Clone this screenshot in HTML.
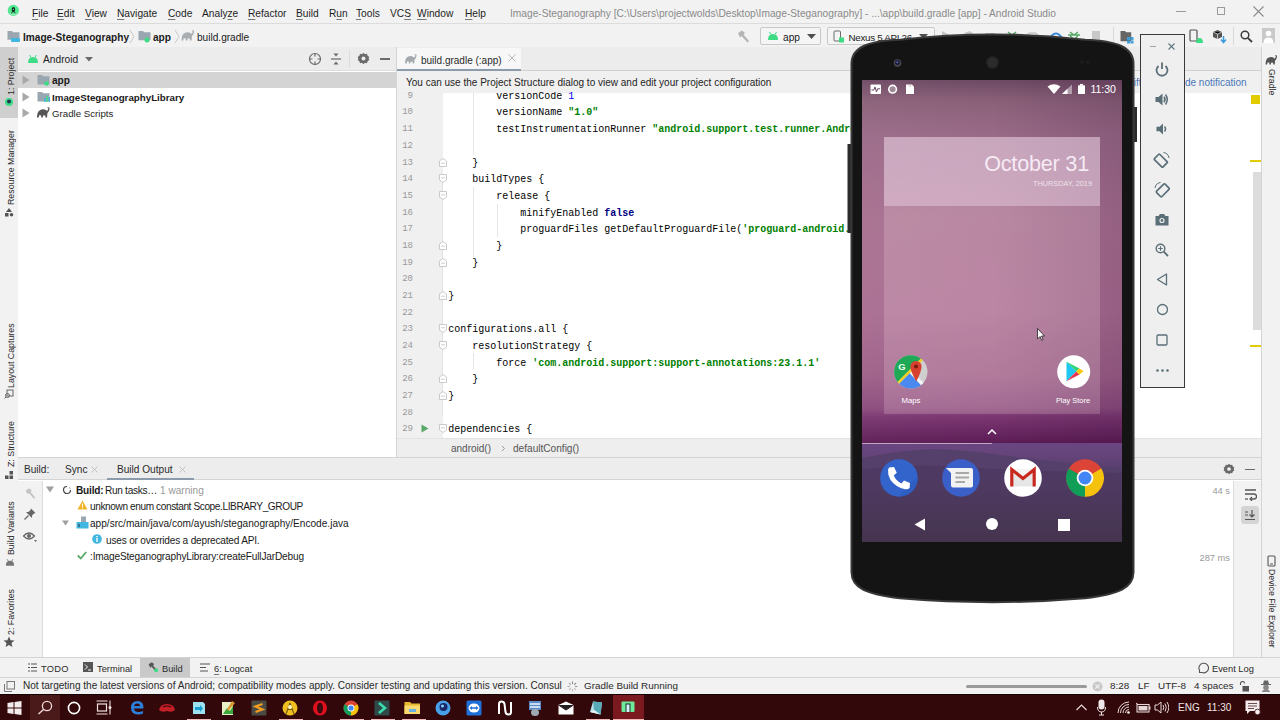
<!DOCTYPE html>
<html><head><meta charset="utf-8">
<style>
*{margin:0;padding:0;box-sizing:border-box}
html,body{width:1280px;height:720px;overflow:hidden;background:#f2f2f2;font-family:"Liberation Sans",sans-serif;color:#1e1e1e}
.a{position:absolute}
u{text-decoration-thickness:1px;text-underline-offset:1.5px;text-decoration-color:#777}
.t{position:absolute;white-space:nowrap;font-size:11px;line-height:14px}
.vt{writing-mode:vertical-rl;transform:rotate(180deg);white-space:nowrap;line-height:12px;color:#2a2a2a;text-align:left}
.cl{position:absolute;left:51.2px;white-space:pre;font-family:"Liberation Mono",monospace;font-size:10px;line-height:14px;color:#000}
.ln{position:absolute;left:0;width:16px;text-align:right;font-family:"Liberation Mono",monospace;font-size:9px;line-height:14px;color:#999}
.fold{position:absolute;left:41.5px}
.vtr{writing-mode:vertical-rl;white-space:nowrap;line-height:12px;color:#2a2a2a}
.mono{font-family:"Liberation Mono",monospace}
</style></head><body>
<!-- MENU BAR -->
<div class="a" id="menubar" style="left:0;top:0;width:1280px;height:24px;background:#f2f2f2;border-bottom:1px solid #dcdcdc">
  <svg class="a" style="left:7px;top:4px" width="13" height="13" viewBox="0 0 13 13"><circle cx="6.3" cy="6.4" r="5.6" fill="#52e890"/><ellipse cx="6.4" cy="5.6" rx="1.7" ry="2.6" fill="#0a2418"/><circle cx="6.4" cy="5.4" r="0.7" fill="#8fd0b0"/><path d="M5.2 8 L4.4 9.8 M7.6 8 L8.4 9.8" stroke="#0a2418" stroke-width="0.9"/><path d="M3 9.5 Q6.3 11.5 9.6 9.5" stroke="#c8f8d8" stroke-width="0.8" fill="none"/></svg>
  <div class="t" style="left:32px;top:6.5px;font-size:10.2px"><u>F</u>ile</div>
  <div class="t" style="left:57px;top:6.5px;font-size:10.2px"><u>E</u>dit</div>
  <div class="t" style="left:85px;top:6.5px;font-size:10.2px"><u>V</u>iew</div>
  <div class="t" style="left:117px;top:6.5px;font-size:10.2px"><u>N</u>avigate</div>
  <div class="t" style="left:168px;top:6.5px;font-size:10.2px"><u>C</u>ode</div>
  <div class="t" style="left:202px;top:6.5px;font-size:10.2px">Analy<u>z</u>e</div>
  <div class="t" style="left:248px;top:6.5px;font-size:10.2px"><u>R</u>efactor</div>
  <div class="t" style="left:296px;top:6.5px;font-size:10.2px"><u>B</u>uild</div>
  <div class="t" style="left:329px;top:6.5px;font-size:10.2px">R<u>u</u>n</div>
  <div class="t" style="left:356px;top:6.5px;font-size:10.2px"><u>T</u>ools</div>
  <div class="t" style="left:390px;top:6.5px;font-size:10.2px">VC<u>S</u></div>
  <div class="t" style="left:417px;top:6.5px;font-size:10.2px"><u>W</u>indow</div>
  <div class="t" style="left:465px;top:6.5px;font-size:10.2px"><u>H</u>elp</div>
  <div class="t" style="left:510px;top:6.5px;font-size:10.2px;color:#8a8a8a">Image-Steganography [C:\Users\projectwolds\Desktop\Image-Steganography] - ...\app\build.gradle [app] - Android Studio</div>
  <div class="a" style="left:1176px;top:11px;width:10px;height:1px;background:#9a9a9a"></div>
  <div class="a" style="left:1217px;top:7px;width:8px;height:8px;border:1px solid #9a9a9a"></div>
  <svg class="a" style="left:1253px;top:6px" width="11" height="11"><path d="M0.5 0.5 L10.5 10.5 M10.5 0.5 L0.5 10.5" stroke="#8a8a8a" stroke-width="1.1"/></svg>
</div>
<!-- NAV BAR -->
<div class="a" id="navbar" style="left:0;top:24px;width:1280px;height:23.5px;background:#f2f2f2;border-bottom:1px solid #d4d4d4">
  <svg class="a" style="left:7px;top:6px" width="14" height="13" viewBox="0 0 14 13"><path d="M0.5 1 h4.5 l1.2 1.3 h6.3 v7.5 h-12 z" fill="#9aa7b0"/><rect x="4" y="8" width="9" height="4" rx="1" fill="#40b6e0"/></svg>
  <div class="t" style="left:23px;top:6.5px;font-size:10.1px;font-weight:bold;color:#1a1a1a">Image-Steganography</div>
  <svg class="a" style="left:129px;top:5px" width="6" height="15"><path d="M1 1 L5 7.5 L1 14" stroke="#c8c8c8" fill="none" stroke-width="1"/></svg>
  <svg class="a" style="left:138px;top:6px" width="14" height="13" viewBox="0 0 14 13"><path d="M0.5 1 h4.5 l1.2 1.3 h6.3 v8 h-12 z" fill="#9aa7b0"/><circle cx="9" cy="10" r="2.5" fill="#3ddc84"/></svg>
  <div class="t" style="left:153px;top:6.5px;font-size:10.1px;font-weight:bold;color:#1a1a1a">app</div>
  <svg class="a" style="left:174px;top:5px" width="6" height="15"><path d="M1 1 L5 7.5 L1 14" stroke="#c8c8c8" fill="none" stroke-width="1"/></svg>
  <svg class="a" style="left:181px;top:6px" width="14" height="12" viewBox="0 0 14 12"><path d="M0.5 10.5 Q0.5 5 3 3.4 Q5.5 2 8 2.4 Q9.8 2.7 10.4 4 Q11.4 3 11.8 1.8 Q11.9 1 11 1 L10.6 0.6 Q13.2 -0.2 13.1 1.8 Q12.9 4.2 10.9 6.2 L10.6 10.5 L9 10.5 L8.7 8.2 Q7.6 8.7 6.6 8.2 L6.3 10.5 L4.8 10.5 L4.5 8.2 Q3.4 8.4 2.8 8 L2.2 10.5 Z" fill="#a8adb2"/></svg>
  <div class="t" style="left:197px;top:6.5px;font-size:10.1px;color:#1a1a1a">build.gradle</div>
  <svg class="a" style="left:736px;top:5px" width="15" height="15" viewBox="0 0 15 15"><path d="M2 4 L6 1.5 L9 4 L7.5 5.5 L13 12 L11.5 13.5 L5.5 7 L4 8.5 Z" fill="#b4b4b4"/></svg>
  <div class="a" style="left:760px;top:3px;width:61px;height:18px;border:1px solid #c9c9c9;border-radius:2px;background:#f5f5f5"></div>
  <svg class="a" style="left:767px;top:7px" width="12" height="10" viewBox="0 0 12 10"><path d="M1 9 Q1 3 6 3 Q11 3 11 9 Z" fill="#3ddc84"/><path d="M2.5 1 L4 3.5 M9.5 1 L8 3.5" stroke="#3ddc84" stroke-width="1"/></svg>
  <div class="t" style="left:783px;top:6.5px;font-size:10.2px;color:#1a1a1a">app</div>
  <svg class="a" style="left:807px;top:10px" width="9" height="6"><path d="M0 0 L9 0 L4.5 5 Z" fill="#505050"/></svg>
  <div class="a" style="left:827px;top:3px;width:108px;height:18px;border:1px solid #c9c9c9;border-radius:2px;background:#f5f5f5"></div>
  <svg class="a" style="left:833px;top:6px" width="12" height="13" viewBox="0 0 12 13"><rect x="1" y="1" width="6.5" height="10" rx="1" fill="none" stroke="#6a6a6a" stroke-width="1"/><rect x="6" y="7.5" width="5" height="5" fill="#3ddc84"/></svg>
  <div class="t" style="left:848.5px;top:6.5px;font-size:9.8px;letter-spacing:-0.3px;color:#1a1a1a">Nexus 5 API 26</div>
  <svg class="a" style="left:919px;top:10px" width="9" height="6"><path d="M0 0 L9 0 L4.5 5 Z" fill="#505050"/></svg>
  <svg class="a" style="left:940px;top:5px" width="160" height="14" viewBox="0 0 160 14"><path d="M2 2 L11 7 L2 12 Z" fill="#c4c4c4"/><path d="M24 4 L30 2 L36 7 L30 12 Z" fill="#c8c8c8"/><rect x="45" y="4" width="10" height="2" fill="#c0c0c0"/><path d="M68 3 L72 6 L76 3 M66 6 H78 M68 6 Q72 14 76 6" stroke="#59a869" stroke-width="1.5" fill="none"/><rect x="88" y="4" width="9" height="9" rx="2" fill="none" stroke="#c8c8c8" stroke-width="1.5"/><path d="M110 9 Q116 0 122 9" stroke="#3a8ad8" stroke-width="2" fill="none"/><path d="M130 3 L134 6 L138 3 M128 6 H140 M130 6 Q134 14 138 6" stroke="#59a869" stroke-width="1.5" fill="none"/><rect x="152" y="2" width="9" height="9" fill="#c8c8c8"/></svg>
  <div class="a" style="left:1113px;top:3px;width:1px;height:18px;background:#d8d8d8"></div>
  <svg class="a" style="left:1120px;top:6px" width="14" height="14" viewBox="0 0 14 14"><path d="M0.5 1 h4.5 l1.2 1.3 h5 v9 h-10.7 z" fill="#666"/><rect x="7" y="7" width="3" height="3" fill="#40a0d8"/><rect x="10.5" y="7" width="3" height="3" fill="#40a0d8"/><rect x="7" y="10.5" width="3" height="3" fill="#40a0d8"/><rect x="10.5" y="10.5" width="3" height="3" fill="#40a0d8"/></svg>
  <svg class="a" style="left:1189px;top:5px" width="15" height="15" viewBox="0 0 15 15"><rect x="1" y="1" width="7" height="11" rx="1" fill="none" stroke="#555" stroke-width="1.2"/><path d="M7 14 Q7 9 10.5 9 Q14 9 14 14 Z" fill="#3ddc84"/></svg>
  <svg class="a" style="left:1212px;top:5px" width="15" height="15" viewBox="0 0 15 15"><path d="M5.5 1 L10 3 L10 8 L5.5 10 L1 8 L1 3 Z" fill="#555"/><path d="M5.5 5 L5.5 10 M1 3 L5.5 5 L10 3" stroke="#ddd" stroke-width="0.8"/><path d="M11.5 7 L11.5 13 M9 10.5 L11.5 13.5 L14 10.5" stroke="#3a9ad9" stroke-width="1.5" fill="none"/></svg>
  <div class="a" style="left:1233px;top:3px;width:1px;height:18px;background:#d8d8d8"></div>
  <svg class="a" style="left:1240px;top:6px" width="13" height="13" viewBox="0 0 13 13"><circle cx="5" cy="5" r="3.8" fill="none" stroke="#3c3c3c" stroke-width="1.5"/><path d="M7.8 7.8 L12 12" stroke="#3c3c3c" stroke-width="1.8"/></svg>
  <div class="a" style="left:1262px;top:4px;width:13px;height:15px;background:#c9c9c9"></div>
  <svg class="a" style="left:1262px;top:4px" width="13" height="15" viewBox="0 0 13 15"><circle cx="6.5" cy="5.5" r="2.8" fill="#fff"/><path d="M1.5 15 Q1.5 9.5 6.5 9.5 Q11.5 9.5 11.5 15 Z" fill="#fff"/></svg>
</div>
<!-- LEFT STRIP -->
<div class="a" id="lstrip" style="left:0;top:47px;width:19px;height:610px;background:#f2f2f2;border-right:1px solid #d4d4d4">
  <div class="a" style="left:0;top:0;width:18px;height:71px;background:#cfcfcf"></div>
  <div class="a vt" style="left:4.5px;top:10px;height:38px;font-size:8.8px">1: Project</div>
  <svg class="a" style="left:4px;top:50px" width="10" height="10"><circle cx="5" cy="5" r="4" fill="#3ddc84"/><circle cx="5" cy="4.5" r="2" fill="#235"/></svg>
  <div class="a vt" style="left:4.5px;top:82px;height:76px;font-size:8.8px">Resource Manager</div>
  <svg class="a" style="left:4px;top:160px" width="10" height="10"><path d="M5 1 L8 5 L2 5 Z" fill="#555"/><rect x="1" y="6" width="3.5" height="3.5" fill="#555"/><circle cx="7.5" cy="7.7" r="1.8" fill="#555"/></svg>
  <div class="a vt" style="left:4.5px;top:275px;height:66px;font-size:8.8px">Layout Captures</div>
  <svg class="a" style="left:4px;top:342px" width="10" height="10"><rect x="3" y="1" width="6" height="6" fill="none" stroke="#666" stroke-width="1"/><circle cx="3.5" cy="6.5" r="2" fill="none" stroke="#666"/><path d="M2 8 L0.5 9.5" stroke="#666"/></svg>
  <div class="a vt" style="left:4.5px;top:374px;height:46px;font-size:8.8px">Z: Structure</div>
  <svg class="a" style="left:4px;top:423px" width="10" height="10"><rect x="5.5" y="1" width="3.5" height="3.5" fill="#555"/><rect x="1" y="5.5" width="3.5" height="3.5" fill="#555"/><rect x="5.5" y="5.5" width="3.5" height="3.5" fill="#555"/></svg>
  <div class="a vt" style="left:4.5px;top:454px;height:54px;font-size:8.8px">Build Variants</div>
  <svg class="a" style="left:5px;top:511px" width="10" height="9" viewBox="0 0 12 10"><path d="M1 9 Q1 3 6 3 Q11 3 11 9 Z" fill="#777"/><path d="M2.5 1 L4 3.5 M9.5 1 L8 3.5" stroke="#777" stroke-width="1"/></svg>
  <div class="a vt" style="left:4.5px;top:543px;height:45px;font-size:8.8px">2: Favorites</div>
  <svg class="a" style="left:3px;top:589px" width="12" height="12" viewBox="0 0 12 12"><path d="M6 0.5 L7.6 4.2 L11.5 4.5 L8.5 7.1 L9.4 11 L6 8.9 L2.6 11 L3.5 7.1 L0.5 4.5 L4.4 4.2 Z" fill="#555"/></svg>
</div>
<!-- PROJECT PANEL -->
<div class="a" id="proj" style="left:18px;top:47px;width:379px;height:410px;background:#fff;border-right:1px solid #d4d4d4">
  <div class="a" style="left:0;top:0;width:378px;height:24px;background:#ececec;border-bottom:1px solid #dedede"></div>
  <svg class="a" style="left:9px;top:7px" width="12" height="10" viewBox="0 0 12 10"><path d="M1 9 Q1 3 6 3 Q11 3 11 9 Z" fill="#3ddc84"/><path d="M2.5 1 L4 3.5 M9.5 1 L8 3.5" stroke="#3ddc84" stroke-width="1"/></svg>
  <div class="t" style="left:25px;top:6px;font-size:10.2px;color:#1e1e1e">Android</div>
  <svg class="a" style="left:67px;top:10px" width="9" height="6"><path d="M0 0 L8 0 L4 4.5 Z" fill="#6a6a6a"/></svg>
  <svg class="a" style="left:290px;top:5px" width="14" height="14" viewBox="0 0 14 14"><circle cx="7" cy="7" r="5.5" fill="none" stroke="#6a6a6a" stroke-width="1.2"/><path d="M7 1 V4.5 M7 9.5 V13 M1 7 H4.5 M9.5 7 H13" stroke="#6a6a6a" stroke-width="1.2"/></svg>
  <svg class="a" style="left:312px;top:5px" width="12" height="14" viewBox="0 0 12 14"><path d="M1 7 H11" stroke="#6a6a6a" stroke-width="1.2"/><path d="M3.5 1.5 H8.5 L6 4.5 Z M3.5 12.5 H8.5 L6 9.5 Z" fill="#6a6a6a"/></svg>
  <div class="a" style="left:331px;top:3px;width:1px;height:18px;background:#dcdcdc"></div>
  <svg class="a" style="left:339px;top:5px" width="13" height="13" viewBox="0 0 13 13"><path d="M6.5 0.8 L8 2.2 L10 1.8 L10.6 3.8 L12.3 5 L11.6 6.5 L12.3 8 L10.6 9.2 L10 11.2 L8 10.8 L6.5 12.2 L5 10.8 L3 11.2 L2.4 9.2 L0.7 8 L1.4 6.5 L0.7 5 L2.4 3.8 L3 1.8 L5 2.2 Z" fill="#6a6a6a"/><circle cx="6.5" cy="6.5" r="2" fill="#ececec"/></svg>
  <div class="a" style="left:362px;top:11px;width:10px;height:1.5px;background:#6a6a6a"></div>
  <div class="a" style="left:0;top:25px;width:378px;height:16px;background:#d4d4d4"></div>
  <svg class="a" style="left:4px;top:28px" width="8" height="10"><path d="M0.5 0.5 L7.5 5 L0.5 9.5 Z" fill="#a8a8a8"/></svg>
  <svg class="a" style="left:19px;top:27px" width="14" height="12" viewBox="0 0 14 12"><path d="M0.5 1 h4.5 l1.2 1.3 h6.3 v8.2 h-12 z" fill="#9aa7b0"/><circle cx="9.5" cy="9.5" r="2.3" fill="#3ddc84"/></svg>
  <div class="t" style="left:34px;top:27.2px;font-size:10.1px;font-weight:bold;color:#1a1a1a">app</div>
  <svg class="a" style="left:4px;top:45px" width="8" height="10"><path d="M0.5 0.5 L7.5 5 L0.5 9.5 Z" fill="#a8a8a8"/></svg>
  <svg class="a" style="left:19px;top:44px" width="14" height="12" viewBox="0 0 14 12"><path d="M0.5 1 h4.5 l1.2 1.3 h6.3 v8.2 h-12 z" fill="#9aa7b0"/><rect x="7" y="7" width="1.5" height="4" fill="#40b6e0"/><rect x="9.3" y="5" width="1.5" height="6" fill="#3ddc84"/><rect x="11.6" y="6" width="1.5" height="5" fill="#40b6e0"/></svg>
  <div class="t" style="left:34px;top:44.2px;font-size:9.75px;font-weight:bold;color:#1a1a1a">ImageSteganographyLibrary</div>
  <svg class="a" style="left:4px;top:61px" width="8" height="10"><path d="M0.5 0.5 L7.5 5 L0.5 9.5 Z" fill="#a8a8a8"/></svg>
  <svg class="a" style="left:18px;top:60px" width="15" height="12" viewBox="0 0 14 12"><path d="M0.5 10.5 Q0.5 5 3 3.4 Q5.5 2 8 2.4 Q9.8 2.7 10.4 4 Q11.4 3 11.8 1.8 Q11.9 1 11 1 L10.6 0.6 Q13.2 -0.2 13.1 1.8 Q12.9 4.2 10.9 6.2 L10.6 10.5 L9 10.5 L8.7 8.2 Q7.6 8.7 6.6 8.2 L6.3 10.5 L4.8 10.5 L4.5 8.2 Q3.4 8.4 2.8 8 L2.2 10.5 Z" fill="#555"/></svg>
  <div class="t" style="left:34px;top:60.2px;font-size:9.7px;color:#1e1e1e">Gradle Scripts</div>
</div>
<!-- EDITOR -->
<div class="a" id="editor" style="left:397px;top:47px;width:864px;height:410px;background:#fff;overflow:hidden">
  <div class="a" style="left:76px;top:46px;width:1px;height:61px;background:#e6e6e6"></div>
  <div class="a" style="left:76px;top:140px;width:1px;height:70px;background:#e6e6e6"></div>
  <div class="a" style="left:100px;top:157px;width:1px;height:33px;background:#e6e6e6"></div>
  <div class="a" style="left:76px;top:306px;width:1px;height:16px;background:#e6e6e6"></div>
  <div class="a" style="left:0;top:46px;width:46px;height:345px;background:#f0f0f0"></div>
  <div class="a" style="left:45px;top:129px;width:1px;height:240px;background:#e2e2e2"></div>
  <div class="ln" style="top:41.82px">9</div>
  <div class="ln" style="top:58.49px">10</div>
  <div class="ln" style="top:75.16px">11</div>
  <div class="ln" style="top:91.83px">12</div>
  <div class="ln" style="top:108.50px">13</div>
  <div class="ln" style="top:125.17px">14</div>
  <div class="ln" style="top:141.84px">15</div>
  <div class="ln" style="top:158.51px">16</div>
  <div class="ln" style="top:175.18px">17</div>
  <div class="ln" style="top:191.85px">18</div>
  <div class="ln" style="top:208.52px">19</div>
  <div class="ln" style="top:225.19px">20</div>
  <div class="ln" style="top:241.86px">21</div>
  <div class="ln" style="top:258.53px">22</div>
  <div class="ln" style="top:275.20px">23</div>
  <div class="ln" style="top:291.87px">24</div>
  <div class="ln" style="top:308.54px">25</div>
  <div class="ln" style="top:325.21px">26</div>
  <div class="ln" style="top:341.88px">27</div>
  <div class="ln" style="top:358.55px">28</div>
  <div class="ln" style="top:375.22px">29</div>
  <div class="cl" style="top:42.82px">        versionCode <span style="color:#0000ff">1</span></div>
  <div class="cl" style="top:59.49px">        versionName <b style="color:#008000">"1.0"</b></div>
  <div class="cl" style="top:76.16px">        testInstrumentationRunner <b style="color:#008000">"android.support.test.runner.AndroidJUnitRunner"</b></div>
  <div class="cl" style="top:92.83px"></div>
  <div class="cl" style="top:109.50px">    }</div>
  <div class="cl" style="top:126.17px">    buildTypes {</div>
  <div class="cl" style="top:142.84px">        release {</div>
  <div class="cl" style="top:159.51px">            minifyEnabled <b style="color:#000080">false</b></div>
  <div class="cl" style="top:176.18px">            proguardFiles getDefaultProguardFile(<b style="color:#008000">'proguard-android.txt'</b>), <b style="color:#008000">'proguard-rules.pro'</b></div>
  <div class="cl" style="top:192.85px">        }</div>
  <div class="cl" style="top:209.52px">    }</div>
  <div class="cl" style="top:226.19px"></div>
  <div class="cl" style="top:242.86px">}</div>
  <div class="cl" style="top:259.53px"></div>
  <div class="cl" style="top:276.20px">configurations.all {</div>
  <div class="cl" style="top:292.87px">    resolutionStrategy {</div>
  <div class="cl" style="top:309.54px">        force <b style="color:#008000">'com.android.support:support-annotations:23.1.1'</b></div>
  <div class="cl" style="top:326.21px">    }</div>
  <div class="cl" style="top:342.88px">}</div>
  <div class="cl" style="top:359.55px"></div>
  <div class="cl" style="top:376.22px">dependencies {</div>
  <svg class="fold" style="top:110.50px" width="8" height="9"><path d="M0.5 8.5 H7.5 V3 L4 0.5 L0.5 3 Z" fill="#fff" stroke="#c4c4c4" stroke-width="0.9"/><path d="M2 5.2 H6" stroke="#c8c8c8" stroke-width="0.9"/></svg>
  <svg class="fold" style="top:127.17px" width="8" height="9"><path d="M0.5 0.5 H7.5 V6 L4 8.5 L0.5 6 Z" fill="#fff" stroke="#c4c4c4" stroke-width="0.9"/><path d="M2 3.8 H6" stroke="#c8c8c8" stroke-width="0.9"/></svg>
  <svg class="fold" style="top:143.84px" width="8" height="9"><path d="M0.5 0.5 H7.5 V6 L4 8.5 L0.5 6 Z" fill="#fff" stroke="#c4c4c4" stroke-width="0.9"/><path d="M2 3.8 H6" stroke="#c8c8c8" stroke-width="0.9"/></svg>
  <svg class="fold" style="top:193.85px" width="8" height="9"><path d="M0.5 8.5 H7.5 V3 L4 0.5 L0.5 3 Z" fill="#fff" stroke="#c4c4c4" stroke-width="0.9"/><path d="M2 5.2 H6" stroke="#c8c8c8" stroke-width="0.9"/></svg>
  <svg class="fold" style="top:210.52px" width="8" height="9"><path d="M0.5 8.5 H7.5 V3 L4 0.5 L0.5 3 Z" fill="#fff" stroke="#c4c4c4" stroke-width="0.9"/><path d="M2 5.2 H6" stroke="#c8c8c8" stroke-width="0.9"/></svg>
  <svg class="fold" style="top:243.86px" width="8" height="9"><path d="M0.5 8.5 H7.5 V3 L4 0.5 L0.5 3 Z" fill="#fff" stroke="#c4c4c4" stroke-width="0.9"/><path d="M2 5.2 H6" stroke="#c8c8c8" stroke-width="0.9"/></svg>
  <svg class="fold" style="top:277.20px" width="8" height="9"><path d="M0.5 0.5 H7.5 V6 L4 8.5 L0.5 6 Z" fill="#fff" stroke="#c4c4c4" stroke-width="0.9"/><path d="M2 3.8 H6" stroke="#c8c8c8" stroke-width="0.9"/></svg>
  <svg class="fold" style="top:293.87px" width="8" height="9"><path d="M0.5 0.5 H7.5 V6 L4 8.5 L0.5 6 Z" fill="#fff" stroke="#c4c4c4" stroke-width="0.9"/><path d="M2 3.8 H6" stroke="#c8c8c8" stroke-width="0.9"/></svg>
  <svg class="fold" style="top:327.21px" width="8" height="9"><path d="M0.5 8.5 H7.5 V3 L4 0.5 L0.5 3 Z" fill="#fff" stroke="#c4c4c4" stroke-width="0.9"/><path d="M2 5.2 H6" stroke="#c8c8c8" stroke-width="0.9"/></svg>
  <svg class="fold" style="top:343.88px" width="8" height="9"><path d="M0.5 8.5 H7.5 V3 L4 0.5 L0.5 3 Z" fill="#fff" stroke="#c4c4c4" stroke-width="0.9"/><path d="M2 5.2 H6" stroke="#c8c8c8" stroke-width="0.9"/></svg>
  <svg class="fold" style="top:377.22px" width="8" height="9"><path d="M0.5 0.5 H7.5 V6 L4 8.5 L0.5 6 Z" fill="#fff" stroke="#c4c4c4" stroke-width="0.9"/><path d="M2 3.8 H6" stroke="#c8c8c8" stroke-width="0.9"/></svg>
  <svg class="a" style="left:24px;top:376.5px" width="8" height="9"><path d="M0.5 0.5 L7.5 4.5 L0.5 8.5 Z" fill="#59a869"/></svg>
  <div class="a" style="left:0;top:0;width:864px;height:24px;background:#ececec;border-bottom:1px solid #d0d0d0"></div>
  <div class="a" style="left:0;top:1px;width:124px;height:22px;background:#f7f7f7"></div>
  <div class="a" style="left:0;top:21.5px;width:124px;height:2px;background:#8b9bab"></div>
  <svg class="a" style="left:7px;top:7px" width="14" height="10" viewBox="0 0 14 11"><path d="M0.5 10.5 Q0.5 5 3 3.4 Q5.5 2 8 2.4 Q9.8 2.7 10.4 4 Q11.4 3 11.8 1.8 Q11.9 1 11 1 L10.6 0.6 Q13.2 -0.2 13.1 1.8 Q12.9 4.2 10.9 6.2 L10.6 10.5 L9 10.5 L8.7 8.2 Q7.6 8.7 6.6 8.2 L6.3 10.5 L4.8 10.5 L4.5 8.2 Q3.4 8.4 2.8 8 L2.2 10.5 Z" fill="#a4a9ae"/></svg>
  <div class="t" style="left:24px;top:6.5px;font-size:10px;color:#2a2a2a">build.gradle (:app)</div>
  <svg class="a" style="left:111px;top:7px" width="8" height="8"><path d="M0.5 0.5 L7.5 7.5 M7.5 0.5 L0.5 7.5" stroke="#b8b8b8" stroke-width="1"/></svg>
  <div class="a" style="left:0;top:24px;width:864px;height:20.8px;background:#f0f0f0;box-shadow:0 1px 1px rgba(0,0,0,0.06)"></div>
  <div class="t" style="left:9px;top:29px;font-size:10px;color:#1e1e1e">You can use the Project Structure dialog to view and edit your project configuration</div>
  <div class="t" style="left:655px;top:29px;font-size:10px;color:#4a78b8">Open (Ctrl+Alt+Shift+S)</div>
  <div class="t" style="left:778.5px;top:29px;font-size:10px;color:#4a78b8">Hide notification</div>
  <div class="a" style="left:854px;top:48px;width:9px;height:9px;background:#e2cc00"></div>
  <div class="a" style="left:853px;top:113px;width:11px;height:1.5px;background:#e2cc00"></div>
  <div class="a" style="left:856px;top:125px;width:8px;height:158px;background:#dcdcdc"></div>
  <div class="a" style="left:853px;top:298px;width:11px;height:1.5px;background:#e2cc00"></div>
  <div class="a" style="left:0;top:391px;width:864px;height:19px;background:#eeeeee;border-top:1px solid #e2e2e2"></div>
  <div class="t" style="left:54px;top:395px;font-size:10px;color:#555">android()</div>
  <svg class="a" style="left:104px;top:398px" width="5" height="7"><path d="M1 1 L3.5 3.5 L1 6" stroke="#999" fill="none"/></svg>
  <div class="t" style="left:116px;top:395px;font-size:10.1px;color:#555">defaultConfig()</div>
</div>
<!-- RIGHT STRIP -->
<div class="a" id="rstrip" style="left:1261px;top:47px;width:19px;height:610px;background:#f2f2f2;border-left:1px solid #d4d4d4">
  <svg class="a" style="left:3px;top:8px" width="13" height="10" viewBox="0 0 14 11"><path d="M0.5 10.5 Q0.5 5 3 3.4 Q5.5 2 8 2.4 Q9.8 2.7 10.4 4 Q11.4 3 11.8 1.8 Q11.9 1 11 1 L10.6 0.6 Q13.2 -0.2 13.1 1.8 Q12.9 4.2 10.9 6.2 L10.6 10.5 L9 10.5 L8.7 8.2 Q7.6 8.7 6.6 8.2 L6.3 10.5 L4.8 10.5 L4.5 8.2 Q3.4 8.4 2.8 8 L2.2 10.5 Z" fill="#555"/></svg>
  <div class="a vtr" style="left:4px;top:22px;height:32px;font-size:8.8px">Gradle</div>
  <svg class="a" style="left:5px;top:508px" width="9" height="12"><rect x="1" y="1" width="7" height="10" rx="1" fill="none" stroke="#555" stroke-width="1.1"/><rect x="3" y="8.5" width="3" height="1" fill="#555"/></svg>
  <div class="a vtr" style="left:4px;top:522px;height:95px;font-size:8.8px">Device File Explorer</div>
</div>
<!-- BUILD PANEL -->
<div class="a" id="build" style="left:18px;top:457px;width:1243px;height:200px;background:#fff;border-top:1px solid #d4d4d4">
  <div class="a" style="left:0;top:0;width:1243px;height:22px;background:#ededed;border-bottom:1px solid #d4d4d4"></div>
  <div class="t" style="left:6px;top:5px;font-size:10.1px;color:#2a2a2a">Build:</div>
  <div class="t" style="left:47px;top:5px;font-size:10.1px;color:#2a2a2a">Sync</div>
  <svg class="a" style="left:73px;top:8px" width="7" height="7"><path d="M0.5 0.5 L6.5 6.5 M6.5 0.5 L0.5 6.5" stroke="#c0c0c0" stroke-width="1"/></svg>
    <div class="t" style="left:99px;top:5px;font-size:10.1px;color:#2a2a2a">Build Output</div>
  <svg class="a" style="left:161px;top:8px" width="7" height="7"><path d="M0.5 0.5 L6.5 6.5 M6.5 0.5 L0.5 6.5" stroke="#c0c0c0" stroke-width="1"/></svg>
  <div class="a" style="left:89px;top:20px;width:87px;height:2px;background:#8b9bab"></div>
  <svg class="a" style="left:1205px;top:5px" width="12" height="12" viewBox="0 0 13 13"><path d="M6.5 0.8 L8 2.2 L10 1.8 L10.6 3.8 L12.3 5 L11.6 6.5 L12.3 8 L10.6 9.2 L10 11.2 L8 10.8 L6.5 12.2 L5 10.8 L3 11.2 L2.4 9.2 L0.7 8 L1.4 6.5 L0.7 5 L2.4 3.8 L3 1.8 L5 2.2 Z" fill="#6a6a6a"/><circle cx="6.5" cy="6.5" r="2" fill="#f2f2f2"/></svg>
  <div class="a" style="left:1227px;top:10.5px;width:10px;height:1.5px;background:#6a6a6a"></div>
  <div class="a" style="left:0;top:23px;width:25px;height:177px;background:#f2f2f2;border-right:1px solid #dcdcdc"></div>
  <svg class="a" style="left:6px;top:29px" width="13" height="13" viewBox="0 0 15 15"><path d="M2 4 L6 1.5 L9 4 L7.5 5.5 L13 12 L11.5 13.5 L5.5 7 L4 8.5 Z" fill="#c4c4c4"/></svg>
  <svg class="a" style="left:6px;top:50px" width="12" height="12" viewBox="0 0 12 12"><path d="M7 0.5 L11.5 5 L10 5.5 L8 7.5 L8 10 L2 4 L4.5 4 L6.5 2 Z" fill="#666"/><path d="M4.5 7.5 L0.5 11.5" stroke="#666" stroke-width="1.3"/></svg>
  <svg class="a" style="left:5px;top:73px" width="15" height="12" viewBox="0 0 15 12"><path d="M0.5 5 Q6 -1 11.5 5 Q6 11 0.5 5 Z" fill="none" stroke="#666" stroke-width="1.3"/><circle cx="6" cy="5" r="2" fill="#666"/><path d="M11 9 L14 9 L12.5 11 Z" fill="#666"/></svg>
  <svg class="a" style="left:28px;top:28px" width="8" height="7"><path d="M0 0.5 L8 0.5 L4 6.5 Z" fill="#a0a0a0"/></svg>
  <svg class="a" style="left:44px;top:27px" width="10" height="10" viewBox="0 0 10 10"><path d="M8.5 5 A3.5 3.5 0 1 1 5 1.5" fill="none" stroke="#444" stroke-width="1.2"/><path d="M7.2 2.2 A3.5 3.5 0 0 1 8.5 4" fill="none" stroke="#bbb" stroke-width="1.2"/></svg>
  <div class="t" style="left:58px;top:25.5px;font-size:10.1px;color:#1a1a1a;letter-spacing:-0.2px"><b>Build:</b></div><div class="t" style="left:87px;top:25.5px;font-size:10.1px;color:#1a1a1a;letter-spacing:-0.3px">Run tasks…</div>
  <div class="t" style="left:142px;top:25.5px;font-size:10.1px;color:#999">1 warning</div>
  <svg class="a" style="left:59px;top:42px" width="11" height="10" viewBox="0 0 11 10"><path d="M5.5 0.5 L10.5 9.5 L0.5 9.5 Z" fill="#f0b429"/><rect x="5" y="3.5" width="1" height="3.3" fill="#fff"/><rect x="5" y="7.5" width="1" height="1" fill="#fff"/></svg>
  <div class="t" style="left:72px;top:42px;font-size:10.1px;letter-spacing:-0.4px;color:#1a1a1a">unknown enum constant Scope.LIBRARY_GROUP</div>
  <svg class="a" style="left:44px;top:62px" width="7" height="6"><path d="M0 0.5 L7 0.5 L3.5 5.5 Z" fill="#a0a0a0"/></svg>
  <svg class="a" style="left:58px;top:58px" width="13" height="13" viewBox="0 0 13 13"><path d="M5 0.5 h5 v6 h-5 z" fill="#9aa7b0"/><rect x="0.5" y="6" width="12" height="6.5" fill="#40b6e0"/><path d="M3 8 v3" stroke="#333" stroke-width="1"/></svg>
  <div class="t" style="left:72px;top:59px;font-size:10.1px;color:#1a1a1a">app/src/main/java/com/ayush/steganography/Encode.java</div>
  <svg class="a" style="left:74px;top:76px" width="10" height="10"><circle cx="5" cy="5" r="4.8" fill="#40b6e0"/><rect x="4.3" y="4" width="1.4" height="4" fill="#fff"/><rect x="4.3" y="2" width="1.4" height="1.3" fill="#fff"/></svg>
  <div class="t" style="left:88px;top:75.5px;font-size:10.1px;letter-spacing:-0.2px;color:#1a1a1a">uses or overrides a deprecated API.</div>
  <svg class="a" style="left:59px;top:93px" width="10" height="9"><path d="M0.8 4.5 L3.8 7.5 L9.2 1" fill="none" stroke="#59a869" stroke-width="1.8"/></svg>
  <div class="t" style="left:72px;top:92px;font-size:10.1px;letter-spacing:-0.16px;color:#1a1a1a">:ImageSteganographyLibrary:createFullJarDebug</div>
  <div class="t" style="left:1170px;top:26px;width:42px;text-align:right;font-size:9.3px;color:#999">44 s</div>
  <div class="t" style="left:1170px;top:93px;width:42px;text-align:right;font-size:9.3px;color:#999">287 ms</div>
  <div class="a" style="left:1215px;top:23px;width:28px;height:177px;background:#f2f2f2;border-left:1px solid #dcdcdc"></div>
  <svg class="a" style="left:1226px;top:30px" width="13" height="13" viewBox="0 0 13 13"><path d="M1 2 H12 M1 6 H10 Q12.5 6 12.5 8.5 Q12.5 11 10 11 H7" fill="none" stroke="#555" stroke-width="1.3"/><path d="M8 9 L6 11 L8 13" fill="none" stroke="#555" stroke-width="1.2"/><path d="M1 11 H4" stroke="#555" stroke-width="1.3"/></svg>
  <div class="a" style="left:1223px;top:48px;width:18px;height:18px;background:#d4d4d4;border-radius:3px"></div>
  <svg class="a" style="left:1226px;top:51px" width="12" height="12" viewBox="0 0 12 12"><path d="M1 3 H4 M1 6 H4 M1 10.5 H11 M8 1 V8 M5.5 5.5 L8 8 L10.5 5.5" fill="none" stroke="#555" stroke-width="1.2"/></svg>
</div>
<!-- BOTTOM TOOLBAR -->
<div class="a" id="btool" style="left:0;top:657px;width:1280px;height:20px;background:#f2f2f2;border-top:1px solid #d4d4d4">
  <svg class="a" style="left:28px;top:5px" width="9" height="9"><path d="M0 1 H2 M3 1 H9 M0 4.5 H2 M3 4.5 H9 M0 8 H2 M3 8 H9" stroke="#555" stroke-width="1.2"/></svg>
  <div class="t" style="left:41px;top:3.5px;font-size:9.3px;color:#2a2a2a;letter-spacing:0.3px">TODO</div>
  <svg class="a" style="left:83px;top:4px" width="10" height="10"><rect x="0" y="0" width="10" height="10" fill="#555"/><path d="M2 2.5 L4.5 5 L2 7.5 M5 8 H8" stroke="#f2f2f2" stroke-width="1" fill="none"/></svg>
  <div class="t" style="left:97px;top:3.5px;font-size:9.3px;color:#2a2a2a">Terminal</div>
  <div class="a" style="left:140px;top:0;width:50px;height:19px;background:#c9c9c9"></div>
  <svg class="a" style="left:147px;top:3px" width="12" height="12" viewBox="0 0 15 15"><path d="M2 4 L6 1.5 L9 4 L7.5 5.5 L13 12 L11.5 13.5 L5.5 7 L4 8.5 Z" fill="#555"/><circle cx="11.5" cy="11.5" r="2.5" fill="#3ddc84"/></svg>
  <div class="t" style="left:162px;top:3.5px;font-size:9.3px;color:#2a2a2a">Build</div>
  <svg class="a" style="left:200px;top:5px" width="10" height="9"><path d="M0 1 H10 M0 4.5 H6 M0 8 H8" stroke="#555" stroke-width="1.2"/></svg>
  <div class="t" style="left:214px;top:3.5px;font-size:9.3px;color:#2a2a2a"><u>6</u>: Logcat</div>
  <svg class="a" style="left:1197px;top:3.5px" width="12" height="12"><path d="M2.5 10.5 L2.5 8.3 A4.8 4.8 0 1 1 5 10.5 Z" fill="none" stroke="#555" stroke-width="1.1" stroke-linejoin="round"/></svg>
  <div class="t" style="left:1212px;top:3.5px;font-size:9.3px;color:#2a2a2a">Event Log</div>
</div>
<!-- STATUS BAR -->
<div class="a" id="status" style="left:0;top:677px;width:1280px;height:17px;background:#f2f2f2;border-top:1px solid #d4d4d4">
  <svg class="a" style="left:4px;top:3px" width="11" height="11"><rect x="3" y="0.5" width="7.5" height="7.5" fill="none" stroke="#777" stroke-width="1"/><path d="M0.5 3 V10.5 H8" fill="none" stroke="#777" stroke-width="1"/></svg>
  <div class="t" style="left:23px;top:0.5px;font-size:10.05px;color:#2a2a2a">Not targeting the latest versions of Android; compatibility modes apply. Consider testing and updating this version. Consul</div>
  <svg class="a" style="left:567px;top:3px" width="11" height="11" viewBox="0 0 11 11"><g stroke="#888" stroke-width="1.1"><path d="M5.5 0.5 V3"/><path d="M5.5 8 V10.5" opacity="0.5"/><path d="M0.5 5.5 H3" opacity="0.6"/><path d="M8 5.5 H10.5" opacity="0.8"/><path d="M2 2 L3.8 3.8" opacity="0.7"/><path d="M7.2 7.2 L9 9" opacity="0.4"/><path d="M9 2 L7.2 3.8" opacity="0.9"/><path d="M2 9 L3.8 7.2" opacity="0.5"/></g></svg>
  <div class="t" style="left:584px;top:0.5px;font-size:9.9px;color:#2a2a2a">Gradle Build Running</div>
  <div class="a" style="left:966px;top:7px;width:121px;height:3px;background:#9a9a9a;border-radius:2px"></div>
  <svg class="a" style="left:1092px;top:3px" width="11" height="11"><circle cx="5.5" cy="5.5" r="5" fill="#c8c8c8"/><path d="M3.3 3.3 L7.7 7.7 M7.7 3.3 L3.3 7.7" stroke="#f2f2f2" stroke-width="1.2"/></svg>
  <div class="t" style="left:1110px;top:0.5px;font-size:9.9px;color:#2a2a2a">8:28</div>
  <div class="t" style="left:1138px;top:0.5px;font-size:9.9px;color:#2a2a2a">LF</div>
  <div class="t" style="left:1158px;top:0.5px;font-size:9.9px;color:#2a2a2a">UTF-8</div>
  <div class="t" style="left:1194px;top:0.5px;font-size:9.9px;color:#2a2a2a">4 spaces</div>
  <svg class="a" style="left:1239px;top:3px" width="11" height="11"><path d="M1.5 4 V2.5 A2 2 0 0 1 5.5 2.5" fill="none" stroke="#555" stroke-width="1.1"/><rect x="3.5" y="5" width="6.5" height="5.5" fill="#555"/></svg>
  <svg class="a" style="left:1259.5px;top:2px" width="12" height="12" viewBox="0 0 12 12"><path d="M3 4 L4 0.5 H8 L9 4 H11 V5 H1 V4 Z" fill="#666"/><circle cx="6" cy="7.5" r="2.8" fill="#888"/><path d="M2 12 Q2 9.5 6 9.5 Q10 9.5 10 12 Z" fill="#888"/></svg>
</div>
<!-- TASKBAR -->
<div class="a" id="taskbar" style="left:0;top:694px;width:1280px;height:26px;background:#32080a;border-top:1px solid #140303">
  <svg class="a" style="left:7px;top:6px" width="15" height="14" viewBox="0 0 15 14"><path d="M0.5 2 L6.5 1.1 V6.5 H0.5 Z M7.5 1 L14.5 0 V6.5 H7.5 Z M0.5 7.5 H6.5 V12.9 L0.5 12 Z M7.5 7.5 H14.5 V14 L7.5 13 Z" fill="#f4ecec"/></svg>
  <div class="a" style="left:30px;top:0;width:30px;height:25px;background:#4a1a1b"></div>
  <svg class="a" style="left:37px;top:5px" width="16" height="15" viewBox="0 0 16 15"><circle cx="10" cy="6" r="4.6" fill="none" stroke="#f0d8d8" stroke-width="1.3"/><path d="M6.8 9.2 L1.5 14" stroke="#f0d8d8" stroke-width="1.4"/></svg>
  <svg class="a" style="left:67px;top:6px" width="14" height="14"><circle cx="7" cy="7" r="5.6" fill="none" stroke="#fff" stroke-width="1.6"/></svg>
  <svg class="a" style="left:96px;top:5px" width="16" height="15" viewBox="0 0 16 15"><rect x="1.5" y="4" width="9" height="7" fill="none" stroke="#f0e0e0" stroke-width="1.2"/><path d="M0.5 1 H11.5 M0.5 14 H11.5 M14 0.5 V14.5" stroke="#f0e0e0" stroke-width="1.1"/><circle cx="14" cy="7.5" r="1.5" fill="#f0e0e0"/></svg>
  <svg class="a" style="left:130px;top:5px" width="15" height="15" viewBox="0 0 15 15"><path d="M13.5 8.5 H4 Q4.5 12 8.5 12 Q11 12 13 11 V13.5 Q11 14.5 8 14.5 Q1 14.5 1 7.5 Q1 1 7.5 1 Q14 1 13.5 8.5 Z M4 6 H10 Q10 3.5 7 3.5 Q4.5 3.5 4 6 Z" fill="#2b7fd8"/></svg>
  <svg class="a" style="left:158px;top:6px" width="18" height="14" viewBox="0 0 18 14"><path d="M1 9 Q2 3 9 3 Q16 3 17 9 Q14 12 9 10 Q4 12 1 9 Z" fill="#c41e26"/><path d="M5 6 Q9 4 13 6" stroke="#2a0a0a" stroke-width="1.2" fill="none"/></svg>
  <svg class="a" style="left:191px;top:5px" width="16" height="16" viewBox="0 0 16 16"><path d="M2 2 H12 L14 4 V14 H2 Z" fill="#9de0f0"/><path d="M4 7 H9 V5 L12 8.5 L9 12 V10 H4 Z" fill="#1a9ed0"/></svg>
  <svg class="a" style="left:220px;top:5px" width="16" height="16" viewBox="0 0 16 16"><path d="M2 2 H13 V15 H2 Z" fill="#e8f0c8"/><path d="M3 14 L7 8 L10 11 L13 6 V14 Z" fill="#3aa83a"/><path d="M12 1 L15 3 L9 10 L7 10.5 L7.5 8.5 Z" fill="#d89a30"/></svg>
  <svg class="a" style="left:251px;top:5px" width="16" height="16" viewBox="0 0 16 16"><rect x="0.5" y="0.5" width="15" height="15" rx="1" fill="#4a4a44"/><path d="M11.5 4 L4.5 6.5 L11.5 9.5 L4.5 12" fill="none" stroke="#f39c1f" stroke-width="2.2"/></svg>
  <svg class="a" style="left:282px;top:5px" width="16" height="16" viewBox="0 0 16 16"><circle cx="8" cy="8" r="7.5" fill="#f0c020"/><path d="M8 3 L4 14 M8 3 L12 14 M5.5 9.5 H10.5" stroke="#7a5a10" stroke-width="1.2" fill="none"/><circle cx="8" cy="7" r="2" fill="#fff7c0"/></svg>
  <svg class="a" style="left:312px;top:5px" width="16" height="16" viewBox="0 0 16 16"><ellipse cx="8" cy="8" rx="7" ry="7.5" fill="#e0101e"/><ellipse cx="8" cy="8" rx="3" ry="5.5" fill="#380b0e"/></svg>
  <svg class="a" style="left:343px;top:5px" width="16" height="16" viewBox="0 0 16 16"><circle cx="8" cy="8" r="7.5" fill="#db4437"/><path d="M8 8 L1.5 4.3 A7.5 7.5 0 0 0 8 15.5 Z" fill="#0f9d58"/><path d="M8 8 L8 15.5 A7.5 7.5 0 0 0 14.5 4.3 Z" fill="#f4c20d"/><circle cx="8" cy="8" r="3.5" fill="#fff"/><circle cx="8" cy="8" r="2.6" fill="#4285f4"/></svg>
  <svg class="a" style="left:374px;top:5px" width="16" height="16" viewBox="0 0 16 16"><rect x="0.5" y="0.5" width="15" height="15" fill="#2f4a48"/><path d="M5 3 L11 8 L5 13" fill="none" stroke="#3ddcb0" stroke-width="2.5"/></svg>
  <svg class="a" style="left:404px;top:5px" width="17" height="15" viewBox="0 0 17 15"><path d="M0.5 2 H6 L7.5 3.5 H16 V14 H0.5 Z" fill="#e8b830"/><rect x="0.5" y="5.5" width="15.5" height="8.5" fill="#f8d870"/><rect x="5" y="9" width="7" height="3" fill="#6ab0e0"/></svg>
  <svg class="a" style="left:435px;top:5px" width="16" height="16" viewBox="0 0 16 16"><circle cx="8" cy="8" r="7.5" fill="#48a0e8"/><circle cx="8.5" cy="7" r="4" fill="#182868"/><circle cx="7.5" cy="6" r="1.5" fill="#8ad0ff"/></svg>
  <svg class="a" style="left:466px;top:5px" width="16" height="16" viewBox="0 0 16 16"><rect x="0.5" y="0.5" width="15" height="15" rx="1.5" fill="#1e6fd8"/><ellipse cx="8" cy="8" rx="5.5" ry="4.5" fill="#fff"/><path d="M3.5 8 L6 6 V10 Z M12.5 8 L10 6 V10 Z M6 7.3 H10 V8.7 H6 Z" fill="#1e6fd8"/></svg>
  <svg class="a" style="left:497px;top:5px" width="16" height="16" viewBox="0 0 16 16"><path d="M2 14 V4 Q2 1.5 4.5 1.5 Q7 1.5 7.5 4 L8.5 12 Q9 14.5 11.5 14.5 Q14 14.5 14 12 V2" fill="none" stroke="#fff" stroke-width="2"/></svg>
  <svg class="a" style="left:527px;top:5px" width="16" height="17" viewBox="0 0 16 17"><rect x="2" y="1" width="12" height="9" fill="#5a8ac8"/><rect x="3" y="3" width="10" height="2" fill="#c8dcf0"/><rect x="3" y="6" width="10" height="2" fill="#c8dcf0"/><ellipse cx="8" cy="12.5" rx="4" ry="3.5" fill="#a0a8b0"/></svg>
  <svg class="a" style="left:558px;top:6px" width="16" height="14" viewBox="0 0 16 14"><path d="M0.5 4 L8 0.5 L15.5 4 V13.5 H0.5 Z" fill="#fff"/><path d="M0.5 4 L8 9 L15.5 4" fill="none" stroke="#380b0e" stroke-width="1"/><path d="M0.5 4 L15.5 4 L8 9 Z" fill="#222"/></svg>
  <svg class="a" style="left:589px;top:5px" width="16" height="16" viewBox="0 0 16 16"><path d="M4 1.5 L13 2.5 L11.5 14.5 L1 12 Z" fill="#b8e0e8"/><path d="M4 1.5 L13 2.5 L11.5 14.5 L5 10 Z" fill="#58aab8"/><path d="M1 12 L5 10 L11.5 14.5 Z" fill="#e8f4f4"/></svg>
  <div class="a" style="left:613px;top:0;width:31px;height:25px;background:#7a1a20"></div>
  <svg class="a" style="left:621px;top:6px" width="14" height="12" viewBox="0 0 14 12"><rect x="0.5" y="0.5" width="13" height="10.5" rx="1" fill="#6ee89a"/><rect x="4.5" y="2.5" width="5" height="8.5" fill="#10302a"/><rect x="5.5" y="3.5" width="3" height="7.5" fill="#d8f0f8"/></svg>
  <div class="a" style="left:187px;top:24px;width:24px;height:2px;background:#f0b8b8"></div>
  <div class="a" style="left:279px;top:24px;width:24px;height:2px;background:#f0b8b8"></div>
  <div class="a" style="left:340px;top:24px;width:24px;height:2px;background:#f0b8b8"></div>
  <div class="a" style="left:371px;top:24px;width:24px;height:2px;background:#f0b8b8"></div>
  <div class="a" style="left:402px;top:24px;width:24px;height:2px;background:#f0b8b8"></div>
  <div class="a" style="left:586px;top:24px;width:24px;height:2px;background:#f0b8b8"></div>
  <div class="a" style="left:613px;top:24px;width:31px;height:2px;background:#f0b8b8"></div>
  <svg class="a" style="left:1076px;top:9px" width="11" height="7"><path d="M0.5 6 L5.5 1 L10.5 6" fill="none" stroke="#e8d8d8" stroke-width="1.2"/></svg>
  <svg class="a" style="left:1097px;top:4px" width="9" height="17" viewBox="0 0 9 17"><rect x="1.5" y="0.5" width="6" height="10" rx="3" fill="#f0e8e8"/><path d="M0.5 8 Q0.5 13 4.5 13 Q8.5 13 8.5 8 M4.5 13 V16 M2 16 H7" fill="none" stroke="#f0e8e8" stroke-width="1"/></svg>
  <svg class="a" style="left:1117px;top:6px" width="13" height="13" viewBox="0 0 13 13"><path d="M1 12 A11 11 0 0 1 12 1 M3.5 12 A8.5 8.5 0 0 1 12 3.5 M6 12 A6 6 0 0 1 12 6 M8.5 12 A3.5 3.5 0 0 1 12 8.5" fill="none" stroke="#e8d8d8" stroke-width="1"/><circle cx="11.5" cy="11.5" r="1.3" fill="#fff"/></svg>
  <svg class="a" style="left:1135px;top:7px" width="16" height="11" viewBox="0 0 16 11"><path d="M1 1 L3 2.5" stroke="#e8d8d8"/><rect x="2" y="2.5" width="12" height="7.5" fill="none" stroke="#e8d8d8" stroke-width="1.1"/><rect x="3.5" y="4" width="9" height="4.5" fill="#e8d8d8"/><rect x="14" y="4.5" width="1.5" height="3" fill="#e8d8d8"/></svg>
  <svg class="a" style="left:1154px;top:5px" width="15" height="15" viewBox="0 0 15 15"><path d="M1 5 H3.5 L7 2 V13 L3.5 10 H1 Z" fill="none" stroke="#e8d8d8" stroke-width="1"/><path d="M9 5 Q10.5 7.5 9 10 M11 3.5 Q13.5 7.5 11 11.5 M13 2 Q16.5 7.5 13 13" fill="none" stroke="#e8d8d8" stroke-width="1"/></svg>
  <div class="t" style="left:1178px;top:6px;font-size:10px;color:#f0e4e4">ENG</div>
  <div class="t" style="left:1207px;top:6px;font-size:10px;color:#f0e4e4">11:30</div>
  <svg class="a" style="left:1245px;top:5px" width="16" height="15" viewBox="0 0 16 15"><path d="M0.5 0.5 H14.5 V11 H5 L2 14 V11 H0.5 Z" fill="#f4ecec"/><path d="M3 3.5 H12 M3 6 H12 M3 8.5 H9" stroke="#5a3a3a" stroke-width="0.9"/><circle cx="12.5" cy="12" r="2.8" fill="#f4ecec" stroke="#380b0e" stroke-width="0.8"/></svg>
</div>
<!-- PHONE -->
<svg class="a" style="left:0;top:0" width="1280" height="720">
  <rect x="847.5" y="144" width="4" height="89" fill="#2c2c2c"/>
  <rect x="1132" y="107" width="5" height="35" fill="#2c2c2c"/>
  <path d="M851.5,64 C851.5,47 868,41 900,39.8 Q992.5,29 1085,39.8 C1117,41 1133.5,47 1133.5,64 L1133.5,572 C1133.5,588 1119,594 1085,598.3 Q992.5,606 900,598.3 C866,594 851.5,588 851.5,572 Z" fill="#141414" stroke="#383838" stroke-width="2"/>
  <circle cx="897.5" cy="63" r="3.8" fill="#4a4a52"/><circle cx="897.5" cy="62.6" r="2.6" fill="#20203a"/><circle cx="897.3" cy="62.3" r="1" fill="#5a5ab0"/>
  <circle cx="992.5" cy="62.5" r="6.3" fill="#262626"/><circle cx="992.5" cy="62.5" r="4.5" fill="#2c2c2c"/>
  <circle cx="1082" cy="62" r="2" fill="#1c1c1c"/><circle cx="1088" cy="62" r="2" fill="#1c1c1c"/>
</svg>
<div class="a" id="screen" style="left:862px;top:80px;width:260px;height:462px;overflow:hidden;background:linear-gradient(180deg,#6e4a64 0%,#8a6078 4.5%,#9a6a88 12%,#a87090 30%,#aa6e92 50%,#9e6088 64%,#8c4c7e 71%,#7a3670 73%,#6a2862 76%,#5a1a52 79%,#5a1a52 100%)">
  <div class="a" style="left:0;top:0;width:260px;height:363px;background:linear-gradient(90deg,rgba(255,255,255,0.03),rgba(0,0,0,0) 50%,rgba(30,0,40,0.14))"></div>
  <div class="a" style="left:22px;top:57px;width:216px;height:69px;background:rgba(255,238,250,0.46)"></div>
  <div class="a" style="left:22px;top:126px;width:216px;height:208px;background:rgba(255,228,236,0.2)"></div>
  <div class="t" style="left:80px;top:72px;width:147px;text-align:right;font-size:21.6px;line-height:24px;color:rgba(255,248,255,0.85);letter-spacing:-0.2px">October 31</div>
  <div class="t" style="left:120px;top:99px;width:110px;text-align:right;font-size:7.3px;line-height:9px;color:#efe2ea">THURSDAY, 2019</div>
  <!-- status bar -->
  <svg class="a" style="left:8px;top:4px" width="46" height="11" viewBox="0 0 46 11">
    <rect x="0.5" y="0.5" width="10.5" height="9.5" rx="0.8" fill="#fff"/><path d="M1.5 6 H3.8 L5 3 L6.5 8 L7.7 4.8 L10 4.8" fill="none" stroke="#6b4862" stroke-width="1"/>
    <circle cx="22.6" cy="5.2" r="4.6" fill="#fff"/><circle cx="22.6" cy="5.2" r="3" fill="#a08898"/>
    <path d="M36 0.5 H42 L44 2.5 V10 H36 Z" fill="#fff"/><path d="M39 1.2 V2.6 M40.5 1.2 V2.6 M42 1.8 V2.6" stroke="#b8a0b0" stroke-width="0.6"/>
  </svg>
  <svg class="a" style="left:185px;top:4px" width="40" height="11" viewBox="0 0 40 11">
    <path d="M0.5 2.5 Q7 -2 13.5 2.5 L7 10 Z" fill="#fff"/>
    <path d="M15 10 L25 0.5 V10 Z" fill="#fff" opacity="0.45"/><path d="M15 10 L20.5 4.8 V10 Z" fill="#fff"/>
    <rect x="31" y="1.2" width="7" height="8.8" rx="0.6" fill="#fff"/><rect x="33" y="0" width="3" height="1.5" fill="#fff"/>
  </svg>
  <div class="t" style="left:228.5px;top:3px;font-size:10.6px;line-height:12px;color:#fff;letter-spacing:-0.1px">11:30</div>
  <!-- app icons -->
  <svg class="a" style="left:32px;top:274.5px" width="34" height="34" viewBox="0 0 34 34">
    <defs><clipPath id="mc"><circle cx="16.8" cy="16.9" r="16.7"/></clipPath></defs>
    <g clip-path="url(#mc)">
      <rect x="0" y="0" width="34" height="34" fill="#cfcfcf"/>
      <path d="M0 0 H30.5 L0 30.5 Z" fill="#1fa855"/>
      <path d="M30.5 0 H34 L0 34 V30.5 Z" fill="#f2d020"/>
      <path d="M0 34 L15.8 18.2 L27.5 30.5 L25 34 Z" fill="#4a8af0"/>
      <path d="M15.8 18.2 L17.5 16.5 L30 28 L27.5 30.5 Z" fill="#f4f4f4"/>
    </g>
    <text x="4.3" y="15" font-family="Liberation Sans" font-size="9.5" font-weight="bold" fill="#e8fff0">G</text>
    <path d="M22 5.9 A5.6 5.6 0 0 1 27.6 11.5 Q27.6 16 22.3 26.5 Q16.4 16 16.4 11.5 A5.6 5.6 0 0 1 22 5.9 Z" fill="#d8402f"/><circle cx="22" cy="11.5" r="2" fill="#7a1a12"/>
  </svg>
  <div class="t" style="left:29px;top:316px;width:40px;text-align:center;font-size:7.8px;line-height:9px;color:#fff">Maps</div>
  <svg class="a" style="left:194.5px;top:274.8px" width="34" height="34" viewBox="0 0 34 34">
    <circle cx="16.7" cy="16.8" r="16.5" fill="#fff"/>
    <path d="M9.5 6.8 L19.3 16.5 L9.5 26.2 Z" fill="#1ec8f0"/>
    <path d="M9.5 6.8 L22.5 13.4 L19.3 16.5 Z" fill="#2ed47a"/>
    <path d="M9.5 26.2 L22.5 19.6 L19.3 16.5 Z" fill="#e83652"/>
    <path d="M22.5 13.4 L26.6 16.2 L22.5 19.6 L19.3 16.5 Z" fill="#fcc80a"/>
  </svg>
  <div class="t" style="left:186px;top:316px;width:50px;text-align:center;font-size:7.4px;line-height:9px;color:#fff">Play Store</div>
  <svg class="a" style="left:175px;top:248px" width="8" height="13" viewBox="0 0 8 13"><path d="M0.5 0.5 V11 L3 8.5 L4.8 12.3 L6.2 11.6 L4.5 8 H7.5 Z" fill="#fff" stroke="#222" stroke-width="0.8"/></svg>
  <svg class="a" style="left:125px;top:348px" width="10" height="7"><path d="M1 6 L5 2 L9 6" fill="none" stroke="#fff" stroke-width="1.5"/></svg>
  <!-- dock -->
  <div class="a" style="left:0;top:363px;width:260px;height:99px;background:linear-gradient(180deg,#6a4680 0%,#65447a 12%,#4f3a62 40%,#45344f 100%)"></div>
  <svg class="a" style="left:0;top:363px" width="260" height="40" viewBox="0 0 260 40"><path d="M0 15 Q40 7 73 6 Q105 7 138 12 Q170 16 198 19 Q230 22 260 25 V40 H0 Z" fill="#55406c"/><path d="M0 26 Q50 20 100 24 Q160 28 260 30 V40 H0 Z" fill="#4d3962"/></svg>
  <div class="a" style="left:0;top:362.5px;width:130px;height:1.2px;background:#c4a4c6"></div>
  <svg class="a" style="left:18px;top:379px" width="38" height="38" viewBox="0 0 38 38"><circle cx="19" cy="19" r="18.8" fill="#3264cc"/><path d="M19 37.8 A18.8 18.8 0 0 0 37.8 19 L30 24 L25 30 Z" fill="#2a58b8" opacity="0.5"/><path d="M9 8.5 L14 8 L16.8 13.8 L13.8 16.5 Q16 22 21.5 24.5 L24 21.5 L30 24 L29.6 29 Q28 30.6 25 30.2 Q16 28.5 10.5 21 Q7.6 16 8 11 Z" fill="#fff"/></svg>
  <svg class="a" style="left:80px;top:379px" width="38" height="38" viewBox="0 0 38 38"><circle cx="19" cy="19" r="18.8" fill="#3a5fc8"/><path d="M4 9 H29 Q31 9 31 11 V26.5 Q31 28.5 29 28.5 H11 Q9 28.5 9 26.5 V14 Z" fill="#f2f2f2"/><path d="M13.5 14 H27 M13.5 18.5 H27 M13.5 23 H23" stroke="#a8a8a8" stroke-width="2.2"/></svg>
  <svg class="a" style="left:142px;top:379px" width="38" height="38" viewBox="0 0 38 38"><circle cx="19" cy="19" r="18.8" fill="#fff"/><path d="M7.5 10 H30.5 V27.5 H7.5 Z" fill="#e6e6e6"/><path d="M7.5 10 L19 19 L30.5 10" fill="#f4f4f4"/><path d="M7.8 27.5 V10.5 L19 19.5 L30.2 10.5 V27.5" fill="none" stroke="#c8281e" stroke-width="3.2" stroke-linejoin="miter"/></svg>
  <svg class="a" style="left:204px;top:379px" width="38" height="38" viewBox="0 0 38 38"><circle cx="19" cy="19" r="18.8" fill="#db4437"/><path d="M19 19 L2.7 9.6 A18.8 18.8 0 0 0 19 37.8 Z" fill="#0f9d58"/><path d="M19 19 L19 37.8 A18.8 18.8 0 0 0 35.3 9.6 Z" fill="#f4c20d"/><circle cx="19" cy="19" r="8.3" fill="#fff"/><circle cx="19" cy="19" r="6.5" fill="#4285f4"/></svg>
  <svg class="a" style="left:52px;top:438px" width="12" height="13"><path d="M11 0.5 V12.5 L0.5 6.5 Z" fill="#fff"/></svg>
  <div class="a" style="left:124px;top:438px;width:12px;height:12px;border-radius:50%;background:#fff"></div>
  <div class="a" style="left:196px;top:438.5px;width:12px;height:12px;background:#fff"></div>
</div>
<!-- EMU PANEL -->
<div class="a" style="left:1140px;top:34px;width:45px;height:354px;background:#efefef;border:1px solid #3a3a3a">
  <div class="a" style="left:9px;top:11px;width:6px;height:1px;background:#9aa6ac"></div>
  <svg class="a" style="left:27px;top:8px" width="7" height="7"><path d="M0.5 0.5 L6.5 6.5 M6.5 0.5 L0.5 6.5" stroke="#607880" stroke-width="1.1"/></svg>
  <svg class="a" style="left:14px;top:27px" width="14" height="15" viewBox="0 0 14 15"><path d="M3.5 4 A5.5 5.5 0 1 0 10.5 4" fill="none" stroke="#5a6f78" stroke-width="1.8"/><path d="M7 0.5 V7" stroke="#5a6f78" stroke-width="1.8"/></svg>
  <svg class="a" style="left:14px;top:58px" width="14" height="13" viewBox="0 0 14 13"><path d="M0.5 4 H3.5 L7.5 0.5 V12.5 L3.5 9 H0.5 Z" fill="#5a6f78"/><path d="M9 3.8 Q11 6.5 9 9.2" fill="none" stroke="#5a6f78" stroke-width="1.6"/><path d="M10.5 1.5 Q14 6.5 10.5 11.5" fill="none" stroke="#5a6f78" stroke-width="1.5"/></svg>
  <svg class="a" style="left:15px;top:88px" width="11" height="12" viewBox="0 0 11 12"><path d="M0.5 3.8 H3.5 L7 0.5 V11.5 L3.5 8.2 H0.5 Z" fill="#5a6f78"/><path d="M8.5 3.5 Q10.5 6 8.5 8.5" fill="none" stroke="#5a6f78" stroke-width="1.5"/></svg>
  <svg class="a" style="left:12px;top:116px" width="18" height="18" viewBox="0 0 18 18"><rect x="4" y="3.5" width="7.5" height="12" rx="1" transform="rotate(-45 8 9.5)" fill="none" stroke="#5a6f78" stroke-width="1.7"/><path d="M10.5 1.5 A6.5 6.5 0 0 1 16 7" fill="none" stroke="#5a6f78" stroke-width="1"/></svg>
  <svg class="a" style="left:12px;top:146px" width="18" height="18" viewBox="0 0 18 18"><rect x="6" y="3.5" width="7.5" height="12" rx="1" transform="rotate(45 10 9.5)" fill="none" stroke="#5a6f78" stroke-width="1.7"/><path d="M7.5 1.5 A6.5 6.5 0 0 0 2 7" fill="none" stroke="#5a6f78" stroke-width="1"/></svg>
  <svg class="a" style="left:14px;top:178px" width="14" height="13" viewBox="0 0 14 13"><path d="M0.5 3 H3.5 L5 1 H9 L10.5 3 H13.5 V12.5 H0.5 Z" fill="#5a6f78"/><circle cx="7" cy="7.5" r="2.6" fill="#efefef"/><circle cx="7" cy="7.5" r="1.4" fill="#5a6f78"/></svg>
  <svg class="a" style="left:14px;top:208px" width="14" height="14" viewBox="0 0 14 14"><circle cx="5.5" cy="5.5" r="4.3" fill="none" stroke="#5a6f78" stroke-width="1.4"/><path d="M8.7 8.7 L13 13" stroke="#5a6f78" stroke-width="1.8"/><path d="M5.5 3.3 V7.7 M3.3 5.5 H7.7" stroke="#5a6f78" stroke-width="1.1"/></svg>
  <svg class="a" style="left:15px;top:238px" width="12" height="13" viewBox="0 0 12 13"><path d="M10.5 1 V12 L1.5 6.5 Z" fill="none" stroke="#5a6f78" stroke-width="1.3" stroke-linejoin="round"/></svg>
  <svg class="a" style="left:14.5px;top:268px" width="13" height="13"><circle cx="6.5" cy="6.5" r="5" fill="none" stroke="#5a6f78" stroke-width="1.3"/></svg>
  <svg class="a" style="left:15px;top:298.5px" width="12" height="12"><rect x="1" y="1" width="10" height="10" rx="1" fill="none" stroke="#5a6f78" stroke-width="1.3"/></svg>
  <svg class="a" style="left:14.5px;top:334px" width="13" height="3"><circle cx="1.5" cy="1.5" r="1.3" fill="#5a6f78"/><circle cx="6.5" cy="1.5" r="1.3" fill="#5a6f78"/><circle cx="11.5" cy="1.5" r="1.3" fill="#5a6f78"/></svg>
</div>
</body></html>
